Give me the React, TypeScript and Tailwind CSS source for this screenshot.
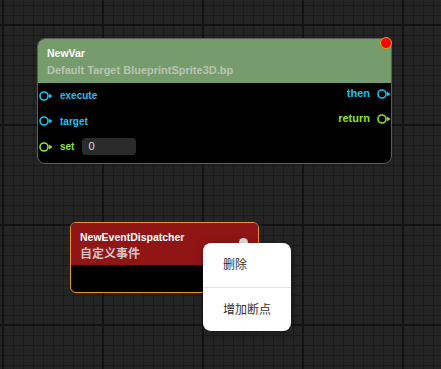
import React from "react";

type PinProps = { color: string };

const Pin = ({ color }: PinProps) => (
  <svg width="14" height="10" viewBox="0 0 14 10" className="shrink-0">
    <circle cx="5" cy="5" r="4" fill="none" stroke={color} strokeWidth="1.6" />
    <polygon points="10,2.5 13.5,5 10,7.5" fill={color} />
  </svg>
);

const CYAN = "#16c4f2";
const GREEN = "#8fe02e";

const App = () => {
  return (
    <div
      className="relative w-[441px] h-[369px] overflow-hidden bg-[#242424] [background-image:linear-gradient(to_right,#121212_2px,transparent_2px),linear-gradient(to_bottom,#121212_2px,transparent_2px),linear-gradient(to_right,#1a1a1a_1px,transparent_1px),linear-gradient(to_bottom,#1a1a1a_1px,transparent_1px)] [background-size:100px_100px,100px_100px,10px_10px,10px_10px] [background-position:2px_24px,2px_24px,3px_5px,3px_5px]"
      style={{ fontFamily: '"Liberation Sans", Arial, "Noto Sans CJK SC", sans-serif' }}
    >
      {/* NewVar node */}
      <div className="absolute left-[37px] top-[38px] w-[355px] h-[126px] rounded-[8px] border border-[#5c5c5c] bg-black overflow-hidden">
        <div className="h-[44px] bg-[#769b6d] px-[9px] pt-[6px]">
          <div className="text-[10.5px] font-bold leading-[16px] text-white">NewVar</div>
          <div className="text-[11px] font-bold leading-[18px] text-[#b9c4b4]">
            Default Target BlueprintSprite3D.bp
          </div>
        </div>
        <div className="flex justify-between">
          <div className="flex flex-col">
            <div className="flex items-center h-[25px] pl-[1px]">
              <Pin color={CYAN} />
              <span className="ml-[7px] text-[10px] font-bold text-[#16c4f2]">execute</span>
            </div>
            <div className="flex items-center h-[26px] pl-[1px]">
              <Pin color={CYAN} />
              <span className="ml-[7px] text-[10px] font-bold text-[#16c4f2]">target</span>
            </div>
            <div className="flex items-center h-[25px] pl-[1px]">
              <Pin color={GREEN} />
              <span className="ml-[7px] text-[10px] font-bold text-[#8fe02e]">set</span>
              <div className="ml-[8px] w-[54px] h-[17px] rounded-[4px] bg-[#2b2b2b] pl-[6px] text-[11px] leading-[17px] text-[#dddddd]">
                0
              </div>
            </div>
          </div>
          <div className="flex flex-col items-end -mt-[2px]">
            <div className="flex items-center h-[25px]">
              <span className="mr-[7px] text-[11px] font-bold text-[#16c4f2]">then</span>
              <Pin color={CYAN} />
            </div>
            <div className="flex items-center h-[25px]">
              <span className="mr-[7px] text-[11px] font-bold text-[#8fe02e]">return</span>
              <Pin color={GREEN} />
            </div>
          </div>
        </div>
      </div>
      <div className="absolute left-[380px] top-[37px] w-[12px] h-[12px] rounded-full bg-[#ff0000] border border-[#c9b300]" />

      {/* NewEventDispatcher node */}
      <div className="absolute left-[70px] top-[222px] w-[189px] h-[71px] rounded-[6px] border-[1.5px] border-[#f0902c] bg-black overflow-hidden">
        <div className="h-[42px] bg-[#901515] px-[9px] pt-[6px]">
          <div className="text-[10.5px] font-bold leading-[16px] text-white">NewEventDispatcher</div>
          <div className="text-[12px] font-bold leading-[18px] text-[#cfc6c6]">自定义事件</div>
        </div>
      </div>
      <div className="absolute left-[239px] top-[238px] w-[9px] h-[9px] rounded-full bg-[#dcdcdc]" />

      {/* context menu */}
      <div className="absolute left-[203px] top-[243px] w-[88px] h-[88px] rounded-[8px] bg-white shadow-[0_2px_8px_rgba(0,0,0,0.25)] flex flex-col text-[12px] text-[#333333]">
        <div className="h-[44px] flex items-center pl-[20px]">删除</div>
        <div className="h-px bg-[#d9e4f2]" />
        <div className="h-[43px] flex items-center pl-[20px]">增加断点</div>
      </div>
    </div>
  );
};

export default App;
